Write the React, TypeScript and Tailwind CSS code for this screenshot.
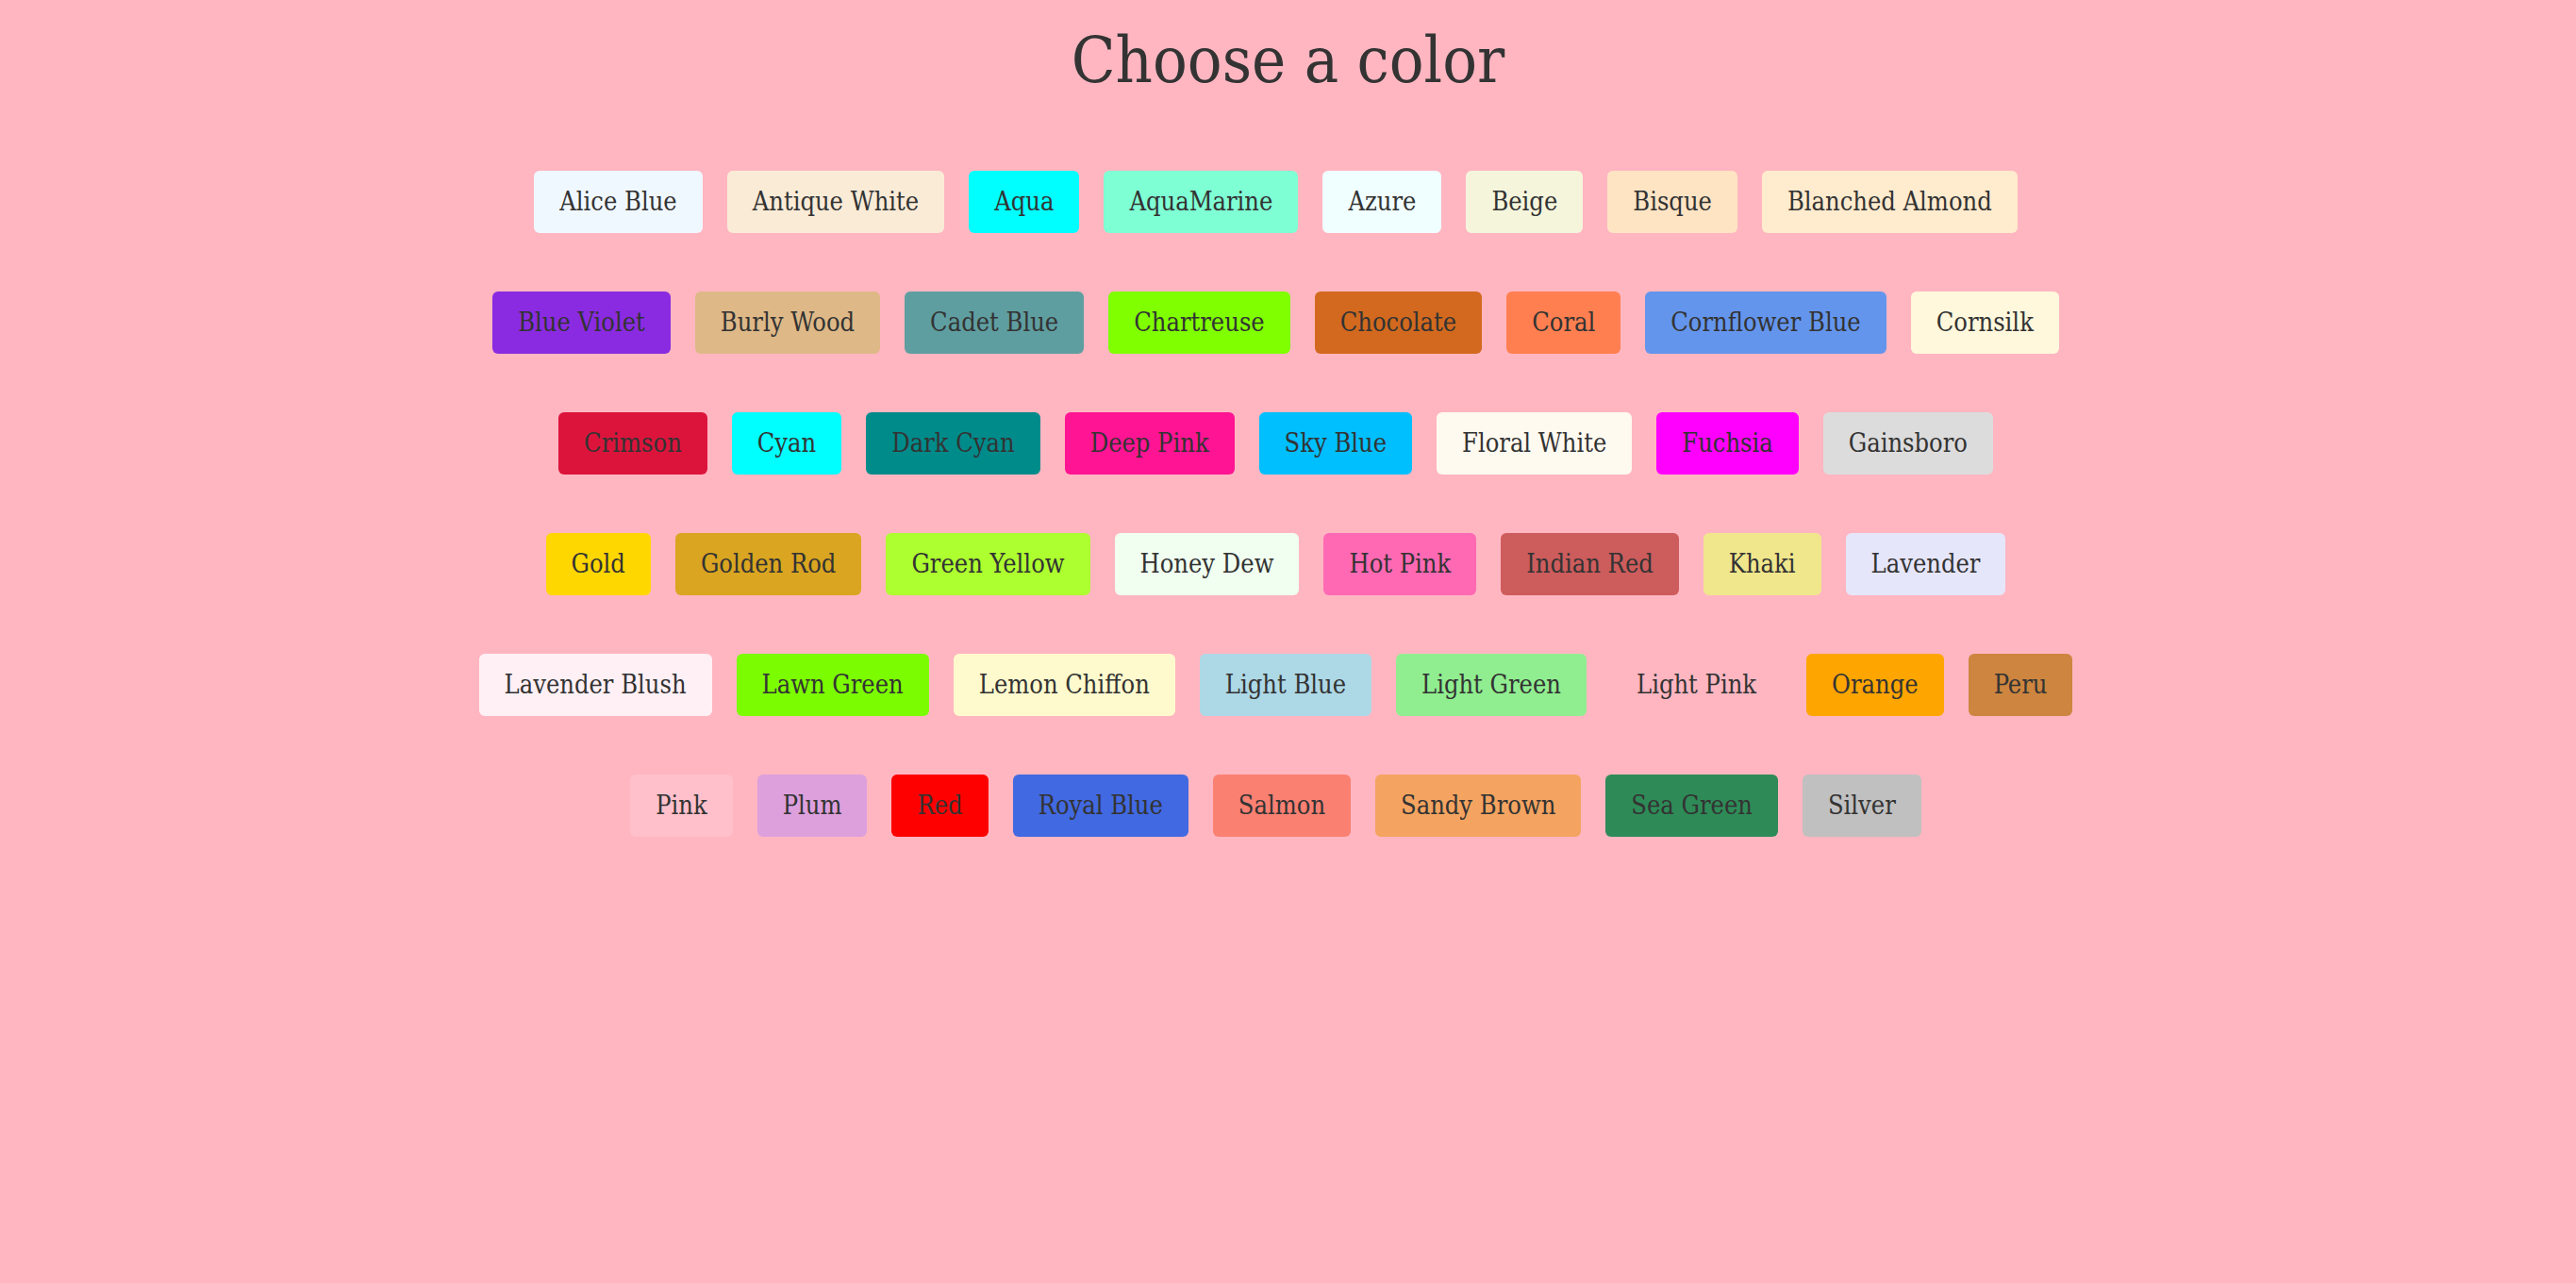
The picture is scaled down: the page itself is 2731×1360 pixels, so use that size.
import React from "react";

type C = { name: string; cls: string };

const rows: C[][] = [
  [
    { name: "Alice Blue", cls: "bg-[#F0F8FF]" },
    { name: "Antique White", cls: "bg-[#FAEBD7]" },
    { name: "Aqua", cls: "bg-[#00FFFF]" },
    { name: "AquaMarine", cls: "bg-[#7FFFD4]" },
    { name: "Azure", cls: "bg-[#F0FFFF]" },
    { name: "Beige", cls: "bg-[#F5F5DC]" },
    { name: "Bisque", cls: "bg-[#FFE4C4]" },
    { name: "Blanched Almond", cls: "bg-[#FFEBCD]" },
  ],
  [
    { name: "Blue Violet", cls: "bg-[#8A2BE2]" },
    { name: "Burly Wood", cls: "bg-[#DEB887]" },
    { name: "Cadet Blue", cls: "bg-[#5F9EA0]" },
    { name: "Chartreuse", cls: "bg-[#7FFF00]" },
    { name: "Chocolate", cls: "bg-[#D2691E]" },
    { name: "Coral", cls: "bg-[#FF7F50]" },
    { name: "Cornflower Blue", cls: "bg-[#6495ED]" },
    { name: "Cornsilk", cls: "bg-[#FFF8DC]" },
  ],
  [
    { name: "Crimson", cls: "bg-[#DC143C]" },
    { name: "Cyan", cls: "bg-[#00FFFF]" },
    { name: "Dark Cyan", cls: "bg-[#008B8B]" },
    { name: "Deep Pink", cls: "bg-[#FF1493]" },
    { name: "Sky Blue", cls: "bg-[#00BFFF]" },
    { name: "Floral White", cls: "bg-[#FFFAF0]" },
    { name: "Fuchsia", cls: "bg-[#FF00FF]" },
    { name: "Gainsboro", cls: "bg-[#DCDCDC]" },
  ],
  [
    { name: "Gold", cls: "bg-[#FFD700]" },
    { name: "Golden Rod", cls: "bg-[#DAA520]" },
    { name: "Green Yellow", cls: "bg-[#ADFF2F]" },
    { name: "Honey Dew", cls: "bg-[#F0FFF0]" },
    { name: "Hot Pink", cls: "bg-[#FF69B4]" },
    { name: "Indian Red", cls: "bg-[#CD5C5C]" },
    { name: "Khaki", cls: "bg-[#F0E68C]" },
    { name: "Lavender", cls: "bg-[#E6E6FA]" },
  ],
  [
    { name: "Lavender Blush", cls: "bg-[#FFF0F5]" },
    { name: "Lawn Green", cls: "bg-[#7CFC00]" },
    { name: "Lemon Chiffon", cls: "bg-[#FFFACD]" },
    { name: "Light Blue", cls: "bg-[#ADD8E6]" },
    { name: "Light Green", cls: "bg-[#90EE90]" },
    { name: "Light Pink", cls: "bg-[#FFB6C1]" },
    { name: "Orange", cls: "bg-[#FFA500]" },
    { name: "Peru", cls: "bg-[#CD853F]" },
  ],
  [
    { name: "Pink", cls: "bg-[#FFC0CB]" },
    { name: "Plum", cls: "bg-[#DDA0DD]" },
    { name: "Red", cls: "bg-[#FF0000]" },
    { name: "Royal Blue", cls: "bg-[#4169E1]" },
    { name: "Salmon", cls: "bg-[#FA8072]" },
    { name: "Sandy Brown", cls: "bg-[#F4A460]" },
    { name: "Sea Green", cls: "bg-[#2E8B57]" },
    { name: "Silver", cls: "bg-[#C0C0C0]" },
  ],
];

export default function App() {
  return (
    <div
      className="min-h-[1360px] w-full bg-[#FFB6C1] text-[#333333]"
      style={{ fontFamily: '"DejaVu Serif Condensed", "DejaVu Serif", serif' }}
    >
      <h1 className="pt-[24px] text-center text-[68px] leading-[80px]">
        Choose a color
      </h1>
      <div className="mt-[77px] flex flex-col gap-[62px]">
        {rows.map((row, i) => (
          <div key={i} className="flex justify-center">
            {row.map((c) => (
              <button
                key={c.name}
                className={`${c.cls} mr-[26px] h-[66px] rounded-[6px] px-[27px] text-[27px] text-[#333333]`}
              >
                {c.name}
              </button>
            ))}
          </div>
        ))}
      </div>
    </div>
  );
}
